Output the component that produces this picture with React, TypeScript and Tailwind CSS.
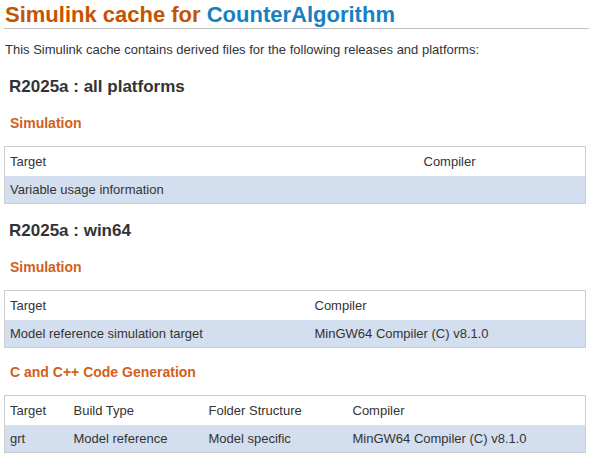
const font = { fontFamily: '"Liberation Sans", Arial, sans-serif' };

type Table = { cols: { label: string; w: string }[]; rows: string[][] };

function CacheTable({ table }: { table: Table }) {
  return (
    <table className="w-[582px] border-collapse border border-[#cccccc] text-[13px] text-[#333333]">
      <thead>
        <tr className="h-[29px]">
          {table.cols.map((c) => (
            <th key={c.label} className={`${c.w} px-[5px] text-left font-normal`}>
              {c.label}
            </th>
          ))}
        </tr>
      </thead>
      <tbody>
        {table.rows.map((r, i) => (
          <tr key={i} className="h-[28px] bg-[#d3dfee]">
            {r.map((v, j) => (
              <td key={j} className="px-[5px]">
                {v}
              </td>
            ))}
          </tr>
        ))}
      </tbody>
    </table>
  );
}

export default function App() {
  return (
    <div style={font} className="h-[459px] w-[590px] overflow-hidden bg-white pl-[4px] text-[#333333]">
      <h1 className="mr-[1px] border-b border-[#c0c0c0] pt-[2px] pl-[1px] text-[22px] font-bold leading-[26px] text-[#c45400]">
        Simulink cache for <span className="text-[#1a7fc1]">CounterAlgorithm</span>
      </h1>
      <p className="mt-[13px] pl-[1px] text-[13px] leading-[16px]">
        This Simulink cache contains derived files for the following releases and platforms:
      </p>

      <h2 className="mt-[19px] pl-[5px] text-[17px] font-bold leading-[20px]">R2025a : all platforms</h2>
      <h3 className="mt-[18px] pl-[6px] text-[14px] font-bold leading-[16px] text-[#d2601a]">Simulation</h3>
      <div className="mt-[15px]">
        <CacheTable
          table={{
            cols: [
              { label: "Target", w: "w-[414px]" },
              { label: "Compiler", w: "" },
            ],
            rows: [["Variable usage information", ""]],
          }}
        />
      </div>

      <h2 className="mt-[17px] pl-[5px] text-[17px] font-bold leading-[20px]">R2025a : win64</h2>
      <h3 className="mt-[18px] pl-[6px] text-[14px] font-bold leading-[16px] text-[#d2601a]">Simulation</h3>
      <div className="mt-[15px]">
        <CacheTable
          table={{
            cols: [
              { label: "Target", w: "w-[305px]" },
              { label: "Compiler", w: "" },
            ],
            rows: [["Model reference simulation target", "MinGW64 Compiler (C) v8.1.0"]],
          }}
        />
      </div>

      <h3 className="mt-[16px] pl-[6px] text-[14px] font-bold leading-[16px] text-[#d2601a]">C and C++ Code Generation</h3>
      <div className="mt-[15px]">
        <CacheTable
          table={{
            cols: [
              { label: "Target", w: "w-[64px]" },
              { label: "Build Type", w: "w-[135px]" },
              { label: "Folder Structure", w: "w-[144px]" },
              { label: "Compiler", w: "" },
            ],
            rows: [["grt", "Model reference", "Model specific", "MinGW64 Compiler (C) v8.1.0"]],
          }}
        />
      </div>
    </div>
  );
}
